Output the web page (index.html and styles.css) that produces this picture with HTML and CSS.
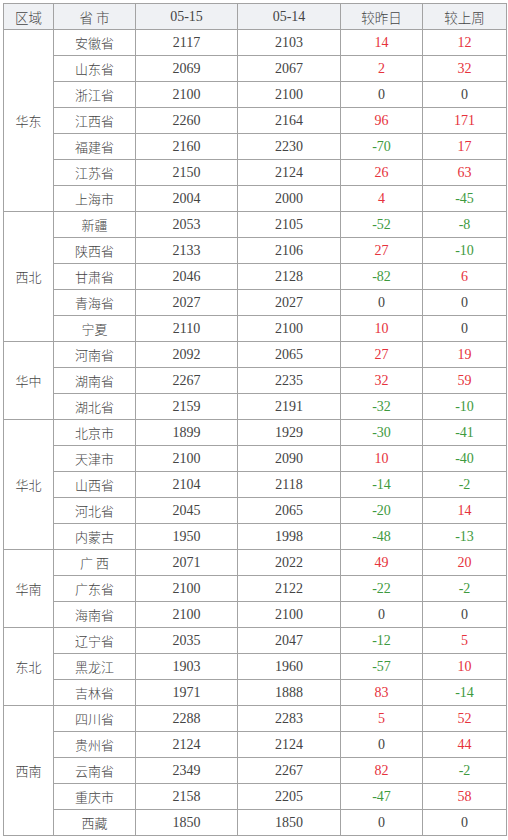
FILE: index.html
```html
<!DOCTYPE html>
<html lang="zh">
<head>
<meta charset="utf-8">
<link rel="stylesheet" href="styles.css">
</head>
<body>
<div class="wrap">
<table class="price">
<colgroup>
<col class="c-region"><col class="c-prov"><col class="c-d1"><col class="c-d2"><col class="c-chg"><col class="c-chg2">
</colgroup>
<thead>
<tr><th>区域</th><th>省 市</th><th class="num">05-15</th><th class="num">05-14</th><th>较昨日</th><th>较上周</th></tr>
</thead>
<tbody>
<tr><td rowspan="7">华东</td><td>安徽省</td><td class="num">2117</td><td class="num">2103</td><td class="num up">14</td><td class="num up">12</td></tr>
<tr><td>山东省</td><td class="num">2069</td><td class="num">2067</td><td class="num up">2</td><td class="num up">32</td></tr>
<tr><td>浙江省</td><td class="num">2100</td><td class="num">2100</td><td class="num">0</td><td class="num">0</td></tr>
<tr><td>江西省</td><td class="num">2260</td><td class="num">2164</td><td class="num up">96</td><td class="num up">171</td></tr>
<tr><td>福建省</td><td class="num">2160</td><td class="num">2230</td><td class="num down">-70</td><td class="num up">17</td></tr>
<tr><td>江苏省</td><td class="num">2150</td><td class="num">2124</td><td class="num up">26</td><td class="num up">63</td></tr>
<tr><td>上海市</td><td class="num">2004</td><td class="num">2000</td><td class="num up">4</td><td class="num down">-45</td></tr>

<tr><td rowspan="5">西北</td><td>新疆</td><td class="num">2053</td><td class="num">2105</td><td class="num down">-52</td><td class="num down">-8</td></tr>
<tr><td>陕西省</td><td class="num">2133</td><td class="num">2106</td><td class="num up">27</td><td class="num down">-10</td></tr>
<tr><td>甘肃省</td><td class="num">2046</td><td class="num">2128</td><td class="num down">-82</td><td class="num up">6</td></tr>
<tr><td>青海省</td><td class="num">2027</td><td class="num">2027</td><td class="num">0</td><td class="num">0</td></tr>
<tr><td>宁夏</td><td class="num">2110</td><td class="num">2100</td><td class="num up">10</td><td class="num">0</td></tr>

<tr><td rowspan="3">华中</td><td>河南省</td><td class="num">2092</td><td class="num">2065</td><td class="num up">27</td><td class="num up">19</td></tr>
<tr><td>湖南省</td><td class="num">2267</td><td class="num">2235</td><td class="num up">32</td><td class="num up">59</td></tr>
<tr><td>湖北省</td><td class="num">2159</td><td class="num">2191</td><td class="num down">-32</td><td class="num down">-10</td></tr>

<tr><td rowspan="5">华北</td><td>北京市</td><td class="num">1899</td><td class="num">1929</td><td class="num down">-30</td><td class="num down">-41</td></tr>
<tr><td>天津市</td><td class="num">2100</td><td class="num">2090</td><td class="num up">10</td><td class="num down">-40</td></tr>
<tr><td>山西省</td><td class="num">2104</td><td class="num">2118</td><td class="num down">-14</td><td class="num down">-2</td></tr>
<tr><td>河北省</td><td class="num">2045</td><td class="num">2065</td><td class="num down">-20</td><td class="num up">14</td></tr>
<tr><td>内蒙古</td><td class="num">1950</td><td class="num">1998</td><td class="num down">-48</td><td class="num down">-13</td></tr>

<tr><td rowspan="3">华南</td><td>广 西</td><td class="num">2071</td><td class="num">2022</td><td class="num up">49</td><td class="num up">20</td></tr>
<tr><td>广东省</td><td class="num">2100</td><td class="num">2122</td><td class="num down">-22</td><td class="num down">-2</td></tr>
<tr><td>海南省</td><td class="num">2100</td><td class="num">2100</td><td class="num">0</td><td class="num">0</td></tr>

<tr><td rowspan="3">东北</td><td>辽宁省</td><td class="num">2035</td><td class="num">2047</td><td class="num down">-12</td><td class="num up">5</td></tr>
<tr><td>黑龙江</td><td class="num">1903</td><td class="num">1960</td><td class="num down">-57</td><td class="num up">10</td></tr>
<tr><td>吉林省</td><td class="num">1971</td><td class="num">1888</td><td class="num up">83</td><td class="num down">-14</td></tr>

<tr><td rowspan="5">西南</td><td>四川省</td><td class="num">2288</td><td class="num">2283</td><td class="num up">5</td><td class="num up">52</td></tr>
<tr><td>贵州省</td><td class="num">2124</td><td class="num">2124</td><td class="num">0</td><td class="num up">44</td></tr>
<tr><td>云南省</td><td class="num">2349</td><td class="num">2267</td><td class="num up">82</td><td class="num down">-2</td></tr>
<tr><td>重庆市</td><td class="num">2158</td><td class="num">2205</td><td class="num down">-47</td><td class="num up">58</td></tr>
<tr><td>西藏</td><td class="num">1850</td><td class="num">1850</td><td class="num">0</td><td class="num">0</td></tr>
</tbody>
</table>
</div>
</body>
</html>
```
FILE: styles.css
```css
html, body {
  margin: 0;
  padding: 0;
  background: #ffffff;
}
.wrap {
  padding: 3px 0 0 3px;
}
.price {
  border-collapse: collapse;
  table-layout: fixed;
  width: 503px;
  font-family: "Noto Sans CJK SC", "Liberation Sans", sans-serif;
  font-size: 13px;
  font-weight: 300;
  color: #444444;
}
.c-region { width: 50px; }
.c-prov { width: 82px; }
.c-d1 { width: 102px; }
.c-d2 { width: 103px; }
.c-chg { width: 82px; }
.c-chg2 { width: 84px; }
.price th,
.price td {
  border: 1px solid #a3a3a3;
  height: 25px;
  padding: 0;
  text-align: center;
  vertical-align: middle;
  font-weight: 300;
  line-height: 16px;
}
.price thead th {
  background: #eff1f4;
  font-size: 13.5px;
}
.price .num {
  font-family: "Liberation Serif", serif;
  font-size: 14px;
  font-weight: normal;
}
.price .up { color: #e6323c; }
.price .down { color: #3e9a3e; }
```
